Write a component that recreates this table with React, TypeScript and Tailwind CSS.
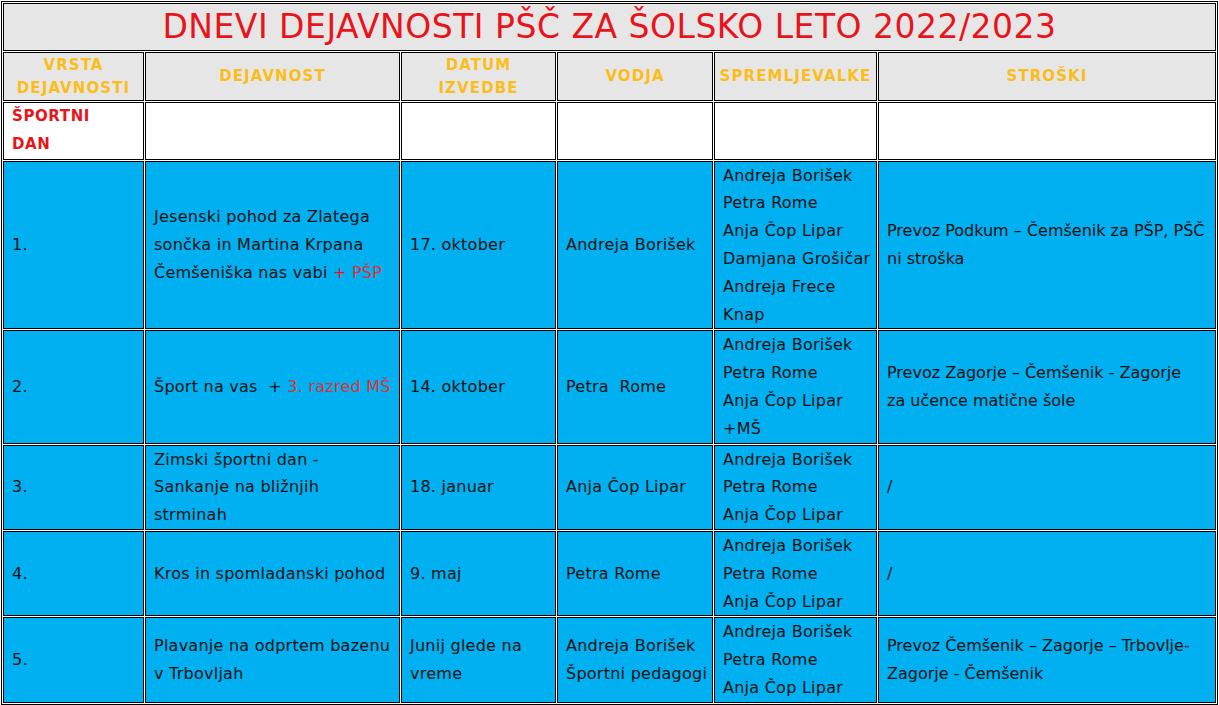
const red = "text-[#e8141c]";

type Row = {
  num: string;
  activity: React.ReactNode[];
  date: React.ReactNode[];
  lead: React.ReactNode[];
  escorts: string[];
  cost: React.ReactNode[];
};

const rows: Row[] = [
  {
    num: "1.",
    activity: [
      "Jesenski pohod za Zlatega",
      "sončka in Martina Krpana",
      <>
        Čemšeniška nas vabi <span className="text-[#e8141c]">+</span>{" "}
        <span className="text-[#d9353b]">PŠP</span>
      </>,
    ],
    date: ["17. oktober"],
    lead: ["Andreja Borišek"],
    escorts: ["Andreja Borišek", "Petra Rome", "Anja Čop Lipar", "Damjana Grošičar", "Andreja Frece", "Knap"],
    cost: ["Prevoz Podkum – Čemšenik za PŠP, PŠČ", "ni stroška"],
  },
  {
    num: "2.",
    activity: [
      <>
        Šport na vas &nbsp;+ <span className="text-[#d9353b]">3. razred MŠ</span>
      </>,
    ],
    date: ["14. oktober"],
    lead: ["Petra\u00a0 Rome"],
    escorts: ["Andreja Borišek", "Petra Rome", "Anja Čop Lipar", "+MŠ"],
    cost: ["Prevoz Zagorje – Čemšenik - Zagorje", "za učence matične šole"],
  },
  {
    num: "3.",
    activity: ["Zimski športni dan -", "Sankanje na bližnjih", "strminah"],
    date: ["18. januar"],
    lead: ["Anja Čop Lipar"],
    escorts: ["Andreja Borišek", "Petra Rome", "Anja Čop Lipar"],
    cost: ["/"],
  },
  {
    num: "4.",
    activity: ["Kros in spomladanski pohod"],
    date: ["9. maj"],
    lead: ["Petra Rome"],
    escorts: ["Andreja Borišek", "Petra Rome", "Anja Čop Lipar"],
    cost: ["/"],
  },
  {
    num: "5.",
    activity: ["Plavanje na odprtem bazenu", "v Trbovljah"],
    date: ["Junij glede na", "vreme"],
    lead: ["Andreja Borišek", "Športni pedagogi"],
    escorts: ["Andreja Borišek", "Petra Rome", "Anja Čop Lipar"],
    cost: ["Prevoz Čemšenik – Zagorje – Trbovlje-", "Zagorje - Čemšenik"],
  },
];

const heads = [
  ["VRSTA", "DEJAVNOSTI"],
  ["DEJAVNOST"],
  ["DATUM", "IZVEDBE"],
  ["VODJA"],
  ["SPREMLJEVALKE"],
  ["STROŠKI"],
];

const cell = "border border-black align-middle px-2 text-left whitespace-nowrap overflow-hidden";

function Lines({ items }: { items: React.ReactNode[] }) {
  return (
    <>
      {items.map((l, i) => (
        <div key={i}>{l}</div>
      ))}
    </>
  );
}

export default function App() {
  return (
    <div
      className="bg-white p-px text-[16px] leading-[27.8px] tracking-[0.25px] text-[#111]"
      style={{ fontFamily: '"Comic Sans MS", "DejaVu Sans", sans-serif' }}
    >
      <table className="w-[1217px] table-fixed border-separate border-spacing-px border border-black bg-white">
        <colgroup>
          <col className="w-[141px]" />
          <col className="w-[255px]" />
          <col className="w-[155px]" />
          <col className="w-[156px]" />
          <col className="w-[163px]" />
          <col />
        </colgroup>
        <thead>
          <tr>
            <th
              colSpan={6}
              className={`h-[48px] border border-black bg-[#e7e6e6] text-center align-middle text-[33px] font-medium leading-[40px] tracking-[0.5px] ${red}`}
            >
              DNEVI DEJAVNOSTI PŠČ ZA ŠOLSKO LETO 2022/2023
            </th>
          </tr>
          <tr>
            {heads.map((h, i) => (
              <th
                key={i}
                className="h-[49px] border border-black bg-[#e7e6e6] px-0 text-center align-middle text-[15px] font-bold leading-[23px] tracking-[1.1px] text-[#fbbd1c]"
              >
                <Lines items={h} />
              </th>
            ))}
          </tr>
        </thead>
        <tbody>
          <tr>
            <td className={`${cell} h-[57px] text-[15px] font-bold tracking-[0.6px] ${red}`}>
              ŠPORTNI
              <br />
              DAN
            </td>
            <td className={cell} />
            <td className={cell} />
            <td className={cell} />
            <td className={cell} />
            <td className={cell} />
          </tr>
          {rows.map((r) => (
            <tr key={r.num} className="bg-[#00b0f0]">
              <td className={cell}>{r.num}</td>
              <td className={cell}>
                <Lines items={r.activity} />
              </td>
              <td className={cell}>
                <Lines items={r.date} />
              </td>
              <td className={cell}>
                <Lines items={r.lead} />
              </td>
              <td className={`${cell} h-[85px]`}>
                <Lines items={r.escorts} />
              </td>
              <td className={`${cell} tracking-normal`}>
                <Lines items={r.cost} />
              </td>
            </tr>
          ))}
        </tbody>
      </table>
    </div>
  );
}
